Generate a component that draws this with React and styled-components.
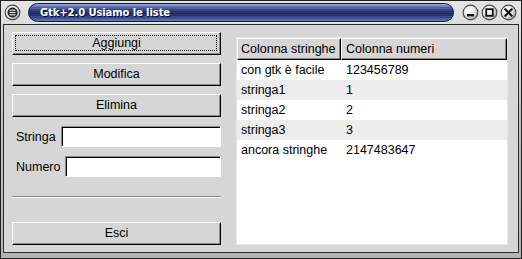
import React from "react";
import styled, { createGlobalStyle } from "styled-components";

const GlobalStyle = createGlobalStyle`
  html, body { margin: 0; padding: 0; background: #000; }
  body { font-family: "Liberation Sans", Arial, sans-serif; }
  * { box-sizing: border-box; }
`;

const Window = styled.div`
  width: 522px;
  height: 259px;
  display: flex;
  flex-direction: column;
  border: 1px solid #202020;
  background: linear-gradient(#e4e4e4, #c2c2c2 40%, #b4b4b4);
`;

const TitleBar = styled.div`
  height: 23px;
  display: flex;
  align-items: center;
  padding: 0 4px 0 3px;
  gap: 7px;
`;

const Pill = styled.div`
  flex: 1;
  height: 19px;
  margin-top: -1px;
  display: flex;
  align-items: center;
  padding-left: 11px;
  border: 1px solid #0c1434;
  border-radius: 10px;
  background:
    repeating-linear-gradient(0deg, rgba(255,255,255,0.07) 0 1px, transparent 1px 2px),
    linear-gradient(#a4b0dc 0%, #5062ac 18%, #1e2c6c 45%, #1a2762 62%, #3c4f9c 85%, #6878bc 100%);
  box-shadow: 0 1px 0 #f0f0f0;
`;

const Title = styled.span`
  font-family: "DejaVu Sans", Verdana, sans-serif;
  font-weight: bold;
  font-size: 10px;
  color: #ffffff;
  text-shadow: 1px 1px 0 #0a1030;
  letter-spacing: -0.1px;
`;

const Controls = styled.div`
  display: flex;
  gap: 2px;
  margin-left: 1px;
`;

const Frame = styled.div`
  flex: 1;
  margin: 0 2px 5px 2px;
  border: 1px solid #2c2c2c;
  background: #d6d6d6;
  display: flex;
`;

const LeftPane = styled.div`
  width: 217px;
  padding: 7px 0 7px 8px;
  display: flex;
  flex-direction: column;
`;

const ButtonStack = styled.div`
  display: flex;
  flex-direction: column;
  gap: 8px;
`;

const Button = styled.button`
  position: relative;
  height: 23px;
  width: 100%;
  margin: 0;
  padding: 0 0 1px 0;
  font-family: "Liberation Sans", Arial, sans-serif;
  font-size: 12.5px;
  color: #000;
  background: #d6d6d6;
  border: 1px solid;
  border-color: #ffffff #000000 #000000 #ffffff;
  box-shadow: inset -1px -1px 0 #8a8a8a;
  &::after {
    content: "";
    display: ${(p) => (p.$focused ? "block" : "none")};
    position: absolute;
    inset: 2px 3px 3px 2px;
    border: 1px dotted #000;
  }
`;

const FormRow = styled.div`
  height: 21px;
  display: flex;
  align-items: center;
  gap: 5px;
  padding-left: 4px;
  margin-top: ${(p) => p.$top}px;
`;

const Label = styled.span`
  font-size: 12.5px;
  color: #000;
`;

const Entry = styled.input`
  flex: 1;
  min-width: 0;
  height: 21px;
  background: #fff;
  border: 1px solid;
  border-color: #8a8a8a #ffffff #ffffff #8a8a8a;
  box-shadow: inset 1px 1px 0 #000;
  outline: none;
  padding: 0 3px;
  font-family: "Liberation Sans", Arial, sans-serif;
  font-size: 12.5px;
`;

const Separator = styled.div`
  height: 2px;
  margin-top: 19px;
  border-top: 1px solid #8a8a8a;
  border-bottom: 1px solid #ffffff;
`;

const Spacer = styled.div`
  flex: 1;
`;

const RightPane = styled.div`
  flex: 1;
  padding: 12px 10px 7px 15px;
  display: flex;
`;

const Scroller = styled.div`
  flex: 1;
  border: 1px solid #e6e6e6;
  background: #fff;
  display: flex;
  flex-direction: column;
`;

const Grid = styled.div`
  display: grid;
  grid-template-columns: 104px 1fr;
`;

const HeaderCell = styled.div`
  height: 22px;
  display: flex;
  align-items: center;
  padding-left: ${(p) => p.$pad}px;
  font-size: 12.5px;
  color: #000;
  background: #d6d6d6;
  border: 1px solid;
  border-color: #ffffff #000000 #000000 #ffffff;
  box-shadow: inset -1px -1px 0 #8a8a8a;
  white-space: nowrap;
  overflow: hidden;
`;

const Cell = styled.div`
  height: 20px;
  display: flex;
  align-items: center;
  padding-left: ${(p) => p.$pad}px;
  font-size: 12.5px;
  color: #000;
  background: ${(p) => (p.$odd ? "#ededed" : "#ffffff")};
  white-space: nowrap;
`;

function CircleButton({ kind }) {
  return (
    <svg width="17" height="17" viewBox="0 0 17 17">
      <defs>
        <radialGradient id={`g-${kind}`} cx="40%" cy="35%" r="70%">
          <stop offset="0%" stopColor="#ffffff" />
          <stop offset="60%" stopColor="#e6e6e6" />
          <stop offset="100%" stopColor="#a0a0a0" />
        </radialGradient>
      </defs>
      <circle cx="8.5" cy="8.5" r="7.9" fill="#4a4a4a" />
      <circle cx="8.5" cy="8.5" r="6.8" fill={`url(#g-${kind})`} />
      {kind === "menu" && (
        <g>
          <circle cx="8.5" cy="8.5" r="5" fill="#222" />
          <rect x="5.5" y="5.6" width="6" height="1.2" fill="#ddd" />
          <rect x="5.5" y="7.9" width="6" height="1.2" fill="#ddd" />
          <rect x="5.5" y="10.2" width="6" height="1.2" fill="#ddd" />
        </g>
      )}
      {kind === "min" && <rect x="5" y="10" width="7" height="2.4" fill="#111" />}
      {kind === "max" && (
        <rect x="5.2" y="5.2" width="6.6" height="6.6" fill="none" stroke="#111" strokeWidth="1.8" />
      )}
      {kind === "close" && (
        <path d="M5.3 5.3 L11.7 11.7 M11.7 5.3 L5.3 11.7" stroke="#111" strokeWidth="2.2" strokeLinecap="round" />
      )}
    </svg>
  );
}

const rows = [
  ["con gtk è facile", "123456789"],
  ["stringa1", "1"],
  ["stringa2", "2"],
  ["stringa3", "3"],
  ["ancora stringhe", "2147483647"],
];

export default function App() {
  return (
    <>
      <GlobalStyle />
      <Window>
        <TitleBar>
          <CircleButton kind="menu" />
          <Pill>
            <Title>Gtk+2.0 Usiamo le liste</Title>
          </Pill>
          <Controls>
            <CircleButton kind="min" />
            <CircleButton kind="max" />
            <CircleButton kind="close" />
          </Controls>
        </TitleBar>
        <Frame>
          <LeftPane>
            <ButtonStack>
              <Button $focused>Aggiungi</Button>
              <Button>Modifica</Button>
              <Button>Elimina</Button>
            </ButtonStack>
            <FormRow $top={9}>
              <Label>Stringa</Label>
              <Entry />
            </FormRow>
            <FormRow $top={9}>
              <Label>Numero</Label>
              <Entry />
            </FormRow>
            <Separator />
            <Spacer />
            <Button>Esci</Button>
          </LeftPane>
          <RightPane>
            <Scroller>
              <Grid>
                <HeaderCell $pad={3}>Colonna stringhe</HeaderCell>
                <HeaderCell $pad={4}>Colonna numeri</HeaderCell>
                {rows.map(([s, n], i) => (
                  <React.Fragment key={s}>
                    <Cell $pad={4} $odd={i % 2 === 1}>{s}</Cell>
                    <Cell $pad={5} $odd={i % 2 === 1}>{n}</Cell>
                  </React.Fragment>
                ))}
              </Grid>
            </Scroller>
          </RightPane>
        </Frame>
      </Window>
    </>
  );
}
